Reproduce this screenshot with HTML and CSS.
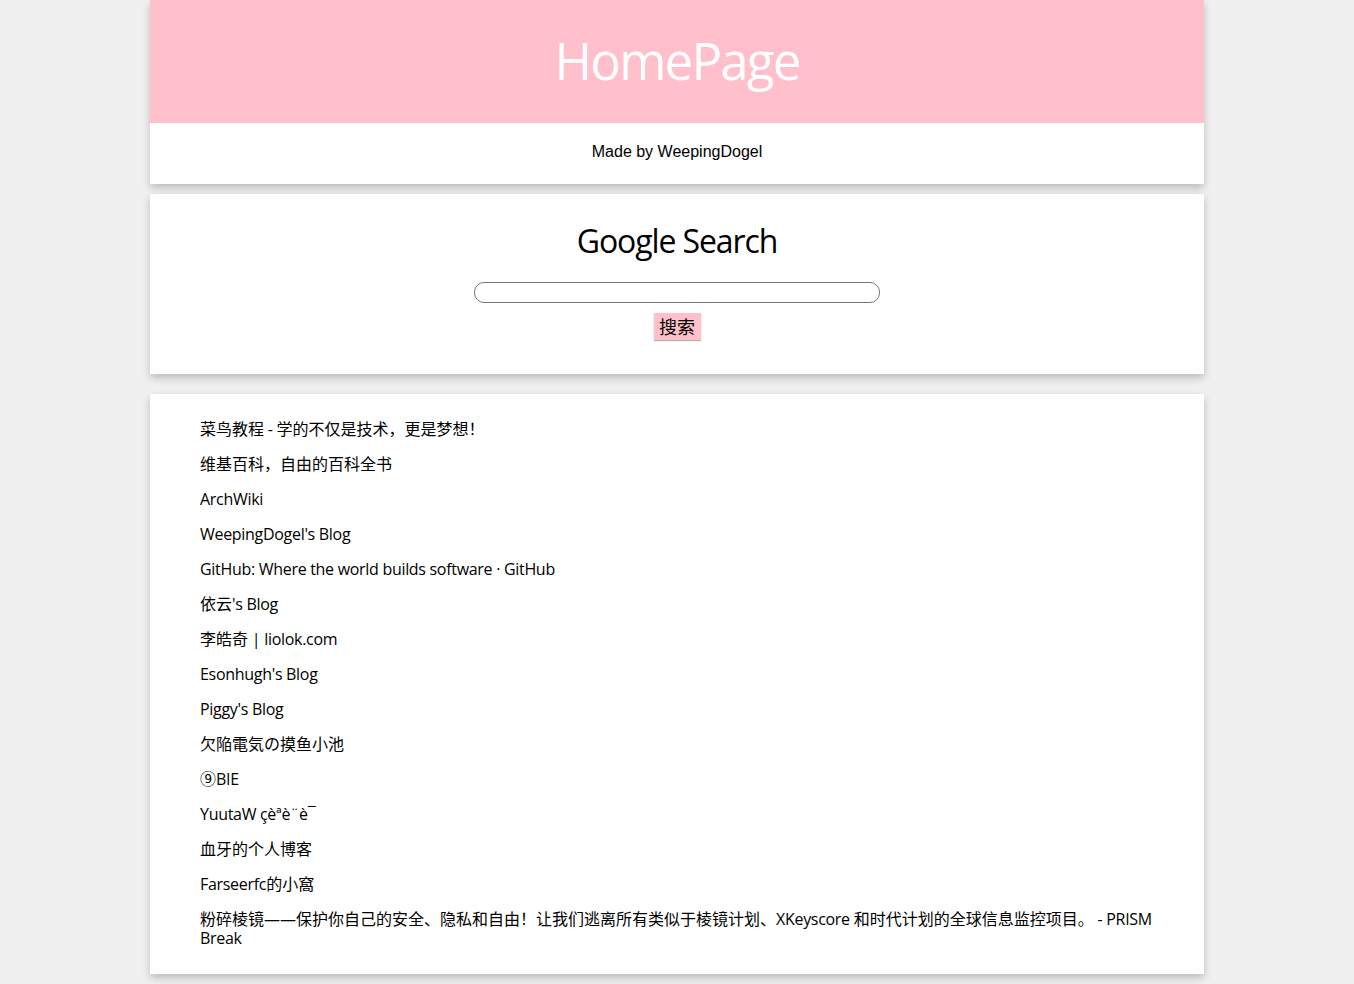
FILE: index.html
```html
<!DOCTYPE html>
<html lang="zh-CN">
<head>
<meta charset="utf-8">
<title>HomePage</title>
<link rel="stylesheet" href="styles.css">
</head>
<body>
<div class="page">
  <div class="card head-card">
    <div class="banner"><h1 class="brand">HomePage</h1></div>
    <div class="credit"><p>Made by WeepingDogel</p></div>
  </div>
  <div class="card search-card">
    <h2 class="search-title">Google Search</h2>
    <form class="search-form">
      <input class="search-input" type="text">
      <button class="search-btn" type="button">搜索</button>
    </form>
  </div>
  <div class="card links-card">
    <p class="link"><span class="cjk">菜鸟教程</span> - <span class="cjk">学的不仅是技术，更是梦想！</span></p>
    <p class="link"><span class="cjk">维基百科，自由的百科全书</span></p>
    <p class="link">ArchWiki</p>
    <p class="link">WeepingDogel's Blog</p>
    <p class="link">GitHub: Where the world builds software · GitHub</p>
    <p class="link"><span class="cjk">依云</span>'s Blog</p>
    <p class="link"><span class="cjk">李皓奇</span> | liolok.com</p>
    <p class="link">Esonhugh's Blog</p>
    <p class="link">Piggy's Blog</p>
    <p class="link"><span class="cjk">欠陥電気の摸鱼小池</span></p>
    <p class="link"><span class="cjk">⑨</span>BIE</p>
    <p class="link">YuutaW çèªè¨è¯</p>
    <p class="link"><span class="cjk">血牙的个人博客</span></p>
    <p class="link">Farseerfc<span class="cjk">的小窩</span></p>
    <p class="link"><span class="cjk">粉碎棱镜——保护你自己的安全、隐私和自由！让我们逃离所有类似于棱镜计划、</span>XKeyscore <span class="cjk">和时代计划的全球信息监控项目。</span> - PRISM Break</p>
  </div>
</div>
</body>
</html>
```

FILE: styles.css
```css
html, body {
  margin: 0;
  padding: 0;
  background: #f0f0f0;
}

body {
  font-family: "Open Sans", "Noto Sans CJK SC", sans-serif;
  color: #000;
}

.page {
  margin: 0 150px;
  padding-bottom: 10px;
}

.card {
  background: #fff;
  box-shadow: 0 4px 8px rgba(0, 0, 0, 0.22);
}

.head-card {
  margin-bottom: 10px;
}

.banner {
  background: #ffc0cb;
  height: 123px;
  display: flex;
  align-items: center;
  justify-content: center;
  padding-bottom: 4px;
  box-sizing: border-box;
}

.brand {
  margin: 0;
  color: #fff;
  font-weight: 400;
  font-size: 51px;
  line-height: 60px;
  letter-spacing: -1.8px;
}

.credit {
  height: 61px;
  display: flex;
  align-items: center;
  justify-content: center;
  padding-bottom: 4px;
  box-sizing: border-box;
}

.credit p {
  margin: 0;
  font-family: "Liberation Sans", Arial, sans-serif;
  font-size: 16px;
  line-height: 18px;
}

.search-card {
  margin-bottom: 20px;
  padding: 25px 0 34px;
  display: flex;
  flex-direction: column;
  align-items: center;
}

.search-title {
  margin: 0 0 19px;
  font-size: 32px;
  font-weight: 400;
  line-height: 44px;
  letter-spacing: -1.1px;
}

.search-form {
  display: flex;
  flex-direction: column;
  align-items: center;
  gap: 10px;
}

.search-input {
  box-sizing: border-box;
  width: 406px;
  height: 21px;
  border: 1px solid #767676;
  border-radius: 10px;
  padding: 0 8px;
  margin: 0;
  background: #fff;
}

.search-btn {
  box-sizing: border-box;
  width: 47px;
  height: 27px;
  border: none;
  padding: 0;
  margin: 0;
  background: #ffc0cb;
  font-family: "Noto Sans CJK SC", sans-serif;
  font-size: 18px;
  line-height: 27px;
  color: #000;
  box-shadow: 0 1px 1px rgba(0, 0, 0, 0.3);
}

.links-card {
  padding: 10px 50px;
}

.link {
  margin: 16px 0;
  font-size: 16px;
  line-height: 19px;
  letter-spacing: -0.3px;
}

.cjk {
  letter-spacing: 0;
}
```
